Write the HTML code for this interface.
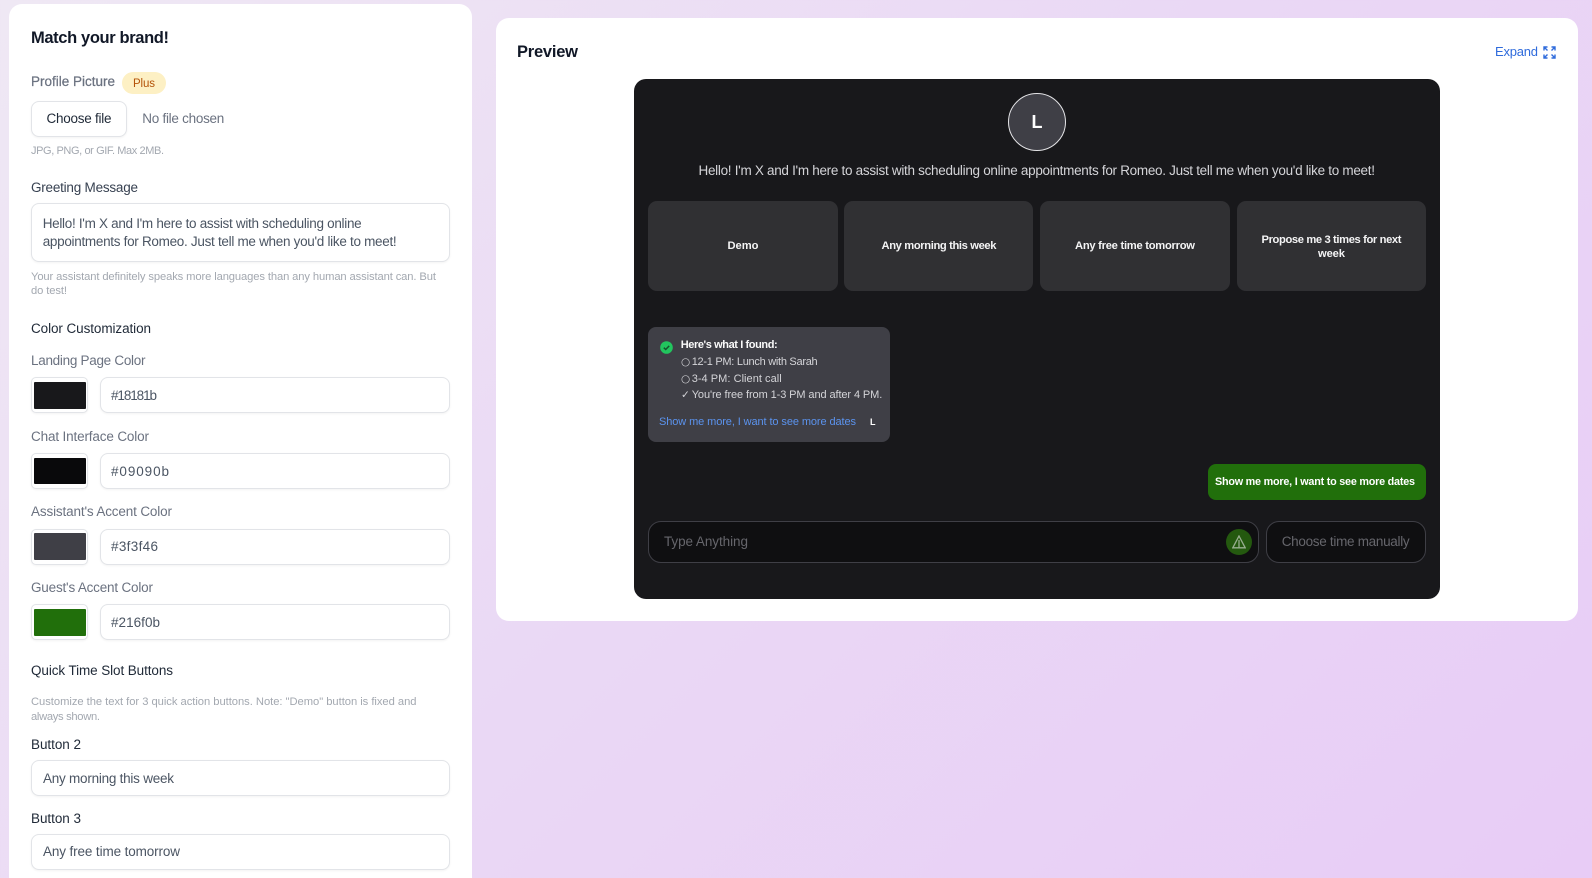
<!DOCTYPE html>
<html lang="en">
<head>
<meta charset="utf-8">
<title>Match your brand</title>
<style>
html,body{margin:0;padding:0;width:1592px;height:878px;overflow:hidden}
body{position:relative;background:linear-gradient(135deg,#efe8f4 0%,#ead8f5 50%,#e8ccf6 100%);font-family:"Liberation Sans",sans-serif}
div{position:absolute;box-sizing:border-box}
.t{position:absolute;white-space:nowrap;line-height:20px;height:20px;font-size:13.5px}
.panel{background:#fff;border-radius:13px}
.box{background:#fff;border:1px solid #e2e4e8;border-radius:8px;box-shadow:0 1px 2px rgba(0,0,0,.05)}
.sw{border-radius:1px}
.g{color:#6b7280}
.d{color:#1f2937}
.v{color:#4b5563}
.h{color:#a3a8b0;font-size:11.2px}
.q{background:#303033;border-radius:9px}
.w{color:#f4f4f5;font-size:11.2px;font-weight:700}
.c{color:#d4d4d8;font-size:11px}
</style>
</head>
<body>
<div class="panel" style="left:9px;top:4px;width:463px;height:900px"></div>
<span class="t" style="left:31px;top:28px;font-size:16.5px;font-weight:700;color:#111827" data-w="138">Match your brand!</span>
<span class="t g" style="left:31px;top:71.5px;-webkit-text-stroke:.25px #6b7280" data-w="84">Profile Picture</span>
<div style="left:122px;top:72px;width:44px;height:22px;border-radius:11px;background:#fdf0c4"></div>
<span class="t" style="left:133px;top:73.5px;font-size:11.5px;color:#b45309" data-w="22">Plus</span>
<div class="box" style="left:31px;top:101px;width:96px;height:36px"></div>
<span class="t d" style="left:46.5px;top:108.5px" data-w="65">Choose file</span>
<span class="t g" style="left:142.3px;top:108.5px" data-w="82">No file chosen</span>
<span class="t h" style="left:31px;top:140.5px;font-size:11px" data-w="133">JPG, PNG, or GIF. Max 2MB.</span>
<span class="t" style="left:31px;top:178px;color:#374151" data-w="107">Greeting Message</span>
<div class="box" style="left:31px;top:203px;width:419px;height:59px"></div>
<span class="t v" style="left:42.7px;top:213.5px" data-w="319">Hello! I'm X and I'm here to assist with scheduling online</span>
<span class="t v" style="left:42.7px;top:231.5px" data-w="354">appointments for Romeo. Just tell me when you'd like to meet!</span>
<span class="t h" style="left:31px;top:266.5px" data-w="405">Your assistant definitely speaks more languages than any human assistant can. But</span>
<span class="t h" style="left:31px;top:280.5px" data-w="36">do test!</span>
<span class="t d" style="left:31px;top:319px" data-w="120">Color Customization</span>

<span class="t g" style="left:31px;top:351px" data-w="114.5">Landing Page Color</span>
<div class="box" style="left:31px;top:377px;width:57px;height:36px;border-radius:5px"></div>
<div class="sw" style="left:34px;top:382px;width:52px;height:27px;background:#18181b"></div>
<div class="box" style="left:99.5px;top:377px;width:350.5px;height:36px"></div>
<span class="t v" style="left:111px;top:386px" data-w="46">#18181b</span>

<span class="t g" style="left:31px;top:426.5px" data-w="118">Chat Interface Color</span>
<div class="box" style="left:31px;top:453px;width:57px;height:36px;border-radius:5px"></div>
<div class="sw" style="left:34px;top:458px;width:52px;height:26px;background:#09090b"></div>
<div class="box" style="left:99.5px;top:453px;width:350.5px;height:36px"></div>
<span class="t v" style="left:111px;top:461.5px" data-w="58">#09090b</span>

<span class="t g" style="left:31px;top:501.7px" data-w="141">Assistant's Accent Color</span>
<div class="box" style="left:31px;top:529px;width:57px;height:36px;border-radius:5px"></div>
<div class="sw" style="left:34px;top:533px;width:52px;height:27px;background:#3f3f46"></div>
<div class="box" style="left:99.5px;top:529px;width:350.5px;height:36px"></div>
<span class="t v" style="left:111px;top:536.5px" data-w="47">#3f3f46</span>

<span class="t g" style="left:31px;top:577.5px" data-w="122">Guest's Accent Color</span>
<div class="box" style="left:31px;top:604px;width:57px;height:36px;border-radius:5px"></div>
<div class="sw" style="left:34px;top:609px;width:52px;height:27px;background:#216f0b"></div>
<div class="box" style="left:99.5px;top:604px;width:350.5px;height:36px"></div>
<span class="t v" style="left:111px;top:612.5px" data-w="49">#216f0b</span>

<span class="t d" style="left:31px;top:660.7px" data-w="142">Quick Time Slot Buttons</span>
<span class="t h" style="left:31px;top:691.5px" data-w="385.5">Customize the text for 3 quick action buttons. Note: "Demo" button is fixed and</span>
<span class="t h" style="left:31px;top:706.5px" data-w="69">always shown.</span>
<span class="t d" style="left:31px;top:735px" data-w="50">Button 2</span>
<div class="box" style="left:31px;top:760px;width:419px;height:36px"></div>
<span class="t v" style="left:43px;top:768.5px" data-w="131">Any morning this week</span>
<span class="t d" style="left:31px;top:808.7px" data-w="50">Button 3</span>
<div class="box" style="left:31px;top:834px;width:419px;height:36px"></div>
<span class="t v" style="left:43px;top:841.5px" data-w="137">Any free time tomorrow</span>

<div class="panel" style="left:496px;top:18px;width:1082px;height:603px"></div>
<span class="t" style="left:517px;top:41.5px;font-size:16.5px;font-weight:700;color:#111827" data-w="61">Preview</span>
<span class="t" style="left:1495px;top:41.5px;font-size:13px;color:#2f6bdc" data-w="43">Expand</span>
<svg style="position:absolute;left:1543px;top:46px" width="13" height="13" viewBox="0 0 13 13" fill="none" stroke="#2f6bdc" stroke-width="1.4"><path d="M1 4.5V1H4.5M1 1L4.5 4.5M8.5 1H12V4.5M12 1L8.5 4.5M1 8.5V12H4.5M1 12L4.5 8.5M8.5 12H12V8.5M12 12L8.5 8.5"/></svg>

<div style="left:634px;top:79px;width:806px;height:520px;background:#18181b;border-radius:12px"></div>
<div style="left:1008px;top:93px;width:58px;height:58px;border-radius:50%;background:#3f3f46;border:1px solid #e4e4e7"></div>
<span class="t" style="left:1031.5px;top:111.5px;font-size:18px;font-weight:700;color:#fff">L</span>
<span class="t" style="left:698.5px;top:160.7px;color:#d4d4d8" data-w="676.5">Hello! I'm X and I'm here to assist with scheduling online appointments for Romeo. Just tell me when you'd like to meet!</span>

<div class="q" style="left:648px;top:201px;width:189.5px;height:90px"></div>
<div class="q" style="left:844px;top:201px;width:189px;height:90px"></div>
<div class="q" style="left:1040px;top:201px;width:189.5px;height:90px"></div>
<div class="q" style="left:1236.5px;top:201px;width:189.5px;height:90px"></div>
<span class="t w" style="left:727.5px;top:236px" data-w="31">Demo</span>
<span class="t w" style="left:881.5px;top:236px" data-w="115">Any morning this week</span>
<span class="t w" style="left:1075px;top:236px" data-w="120">Any free time tomorrow</span>
<span class="t w" style="left:1261.5px;top:229.5px" data-w="140">Propose me 3 times for next</span>
<span class="t w" style="left:1318px;top:243.5px" data-w="27">week</span>

<div style="left:648px;top:327px;width:242px;height:115px;background:#3f3f46;border-radius:8px"></div>
<svg style="position:absolute;left:659.5px;top:340.5px" width="13" height="13" viewBox="0 0 13 13"><circle cx="6.5" cy="6.5" r="6.3" fill="#22c55e"/><path d="M3.8 6.7L5.7 8.5L9.2 4.9" fill="none" stroke="#14532d" stroke-width="1.5"/></svg>
<span class="t" style="left:680.7px;top:334.5px;font-size:11px;font-weight:700;color:#fafafa" data-w="97">Here's what I found:</span>
<span class="t c" style="left:681px;top:352px;font-family:'DejaVu Sans',sans-serif;font-size:10.5px">○</span>
<span class="t c" style="left:691.7px;top:352px" data-w="126">12-1 PM: Lunch with Sarah</span>
<span class="t c" style="left:681px;top:368.5px;font-family:'DejaVu Sans',sans-serif;font-size:10.5px">○</span>
<span class="t c" style="left:691.7px;top:368.5px" data-w="90">3-4 PM: Client call</span>
<span class="t c" style="left:681px;top:384.8px;font-family:'DejaVu Sans',sans-serif;font-size:10.5px">✓</span>
<span class="t c" style="left:691.7px;top:384.8px" data-w="190.6">You're free from 1-3 PM and after 4 PM.</span>
<span class="t" style="left:659px;top:412px;font-size:11px;color:#5b93ee" data-w="197">Show me more, I want to see more dates</span>
<span class="t" style="left:870px;top:412px;font-size:9px;font-weight:700;color:#fff">L</span>

<div style="left:1208px;top:464px;width:218px;height:36px;background:#216f0b;border-radius:8px"></div>
<span class="t" style="left:1215px;top:472px;font-size:10.8px;font-weight:700;color:#fff" data-w="200">Show me more, I want to see more dates</span>

<div style="left:648px;top:521px;width:611px;height:42px;background:#0f0f11;border:1px solid #3f3f46;border-radius:13px"></div>
<span class="t" style="left:664px;top:532px;color:#66666c" data-w="84">Type Anything</span>
<div style="left:1226px;top:529px;width:26px;height:26px;border-radius:50%;background:#24590f"></div>
<svg style="position:absolute;left:1232px;top:534.5px" width="14" height="14" viewBox="0 0 14 14" fill="none" stroke="#98ae90" stroke-width="1.3"><path d="M7 1L13.2 12.8H.8Z M7 5V12.8"/></svg>
<div style="left:1266px;top:521px;width:160px;height:42px;background:#0f0f11;border:1px solid #3f3f46;border-radius:13px"></div>
<span class="t" style="left:1281.7px;top:532px;color:#66666c" data-w="128">Choose time manually</span>

<script>
document.querySelectorAll('.t[data-w]').forEach(function(e){
  var n=e.textContent.length,w=parseFloat(e.getAttribute('data-w')),m=e.getBoundingClientRect().width;
  if(n>1){e.style.letterSpacing=((w-m)/(n-1)).toFixed(3)+'px';}
});
</script>
</body>
</html>
